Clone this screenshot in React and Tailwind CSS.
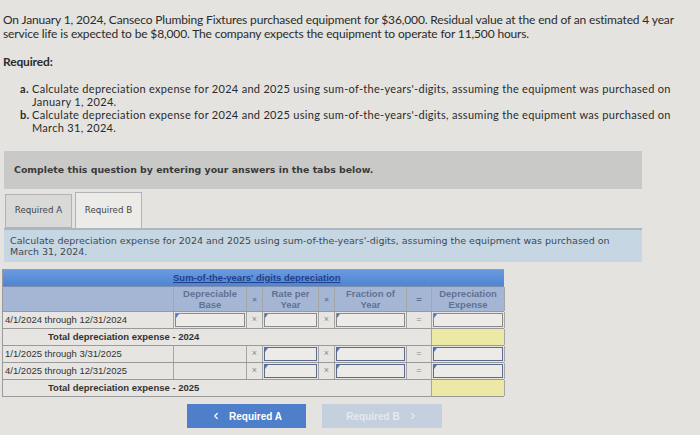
import { ChevronLeft, ChevronRight } from "lucide-react";

function Input({ blue }) {
  return (
    <div className="p-px h-full">
      <div
        className={`relative h-full bg-[#ecebe8] border ${blue ? "border-[#5d6b8e]" : "border-[#8a8a8a]"}`}
      >
        <span className="absolute left-0 top-0 w-0 h-0 border-t-[4px] border-t-[#4d77c4] border-r-[3px] border-r-transparent" />
      </div>
    </div>
  );
}

function Op({ sign }) {
  return (
    <div className="flex items-center justify-center text-[9px] text-[#8a8a8a] border-r border-[#a5a5a5] bg-[#e6e5e2]">
      {sign}
    </div>
  );
}

function Cell({ children, className = "" }) {
  return <div className={`border-r border-[#a5a5a5] ${className}`}>{children}</div>;
}

export default function App() {
  const rowCls = "grid grid-cols-[171px_73px_16px_56px_16px_72px_25px_73px] border-b border-[#9a9a9a]";

  return (
    <div className="w-[700px] h-[435px] overflow-hidden bg-[#e4e3df] text-[#2b2b2b] font-['Lato',sans-serif]">
      {/* PROBLEM TEXT */}
      <div className="pl-[3px] pt-[13px] text-[12px] leading-[14px] tracking-[-0.15px] whitespace-nowrap">
        <p>
          On January 1, 2024, Canseco Plumbing Fixtures purchased equipment for $36,000. Residual value at the end of an estimated 4 year
          <br />
          service life is expected to be $8,000. The company expects the equipment to operate for 11,500 hours.
        </p>
        <p className="mt-[14px] font-bold">Required:</p>
        <div className="mt-[13px] pl-[17px] text-[11px] leading-[13px] tracking-[0.3px]">
          <div className="flex">
            <span className="font-bold w-[12px]">a.</span>
            <span>
              Calculate depreciation expense for 2024 and 2025 using sum-of-the-years'-digits, assuming the equipment was purchased on
              <br />
              January 1, 2024.
            </span>
          </div>
          <div className="flex">
            <span className="font-bold w-[12px]">b.</span>
            <span>
              Calculate depreciation expense for 2024 and 2025 using sum-of-the-years'-digits, assuming the equipment was purchased on
              <br />
              March 31, 2024.
            </span>
          </div>
        </div>
      </div>

      {/* INSTRUCTION BAR */}
      <div className="ml-[4px] mt-[17px] w-[638px] h-[38px] bg-[#c9c9c8] flex items-center pl-[10px] font-['DejaVu_Sans',sans-serif] text-[9.4px] font-bold text-[#3a3a3a]">
        Complete this question by entering your answers in the tabs below.
      </div>

      {/* TABS */}
      <div className="ml-[5px] mt-[3px] flex items-end font-['DejaVu_Sans',sans-serif] text-[8.7px] text-[#444]">
        <div className="w-[67px] h-[34px] bg-[#d9d9d7] border border-[#b3b3b3] flex items-center justify-center">Required A</div>
        <div className="ml-[3px] w-[67px] h-[36px] bg-[#ecebe8] border border-b-0 border-[#b3b3b3] flex items-center justify-center">
          Required B
        </div>
      </div>

      {/* TAB BODY HEADER */}
      <div className="ml-[4px] w-[638px] h-[34px] bg-[#c6d6e2] border-t-2 border-[#aab7c1] pl-[6px] pt-[5px] font-['DejaVu_Sans',sans-serif] text-[9.5px] leading-[11px] text-[#3d4a55] whitespace-nowrap">
        Calculate depreciation expense for 2024 and 2025 using sum-of-the-years'-digits, assuming the equipment was purchased on
        <br />
        March 31, 2024.
      </div>

      {/* TABLE */}
      <div className="ml-[2px] mt-[7px] w-[502px] border-l border-t border-[#9a9a9a] font-['Liberation_Sans',sans-serif] text-[9.5px] text-[#333] whitespace-nowrap">
        <div className="h-[17px] bg-gradient-to-b from-[#6a9be0] to-[#4f84d2] border-b border-[#7c8fae] flex items-center">
          <span className="ml-[170px] font-bold text-[#1f3f8a] underline">Sum-of-the-years' digits depreciation</span>
        </div>
        <div className={`${rowCls} h-[25px] bg-[#a4b6d4] text-[#5f7294] font-bold leading-[11px]`}>
          <Cell className="border-[#8194b3]" />
          <Cell className="border-[#8194b3] flex items-center justify-center text-center">Depreciable<br />Base</Cell>
          <Cell className="border-[#8194b3] flex items-center justify-center text-[8px]">×</Cell>
          <Cell className="border-[#8194b3] flex items-center justify-center text-center">Rate per<br />Year</Cell>
          <Cell className="border-[#8194b3] flex items-center justify-center text-[8px]">×</Cell>
          <Cell className="border-[#8194b3] flex items-center justify-center text-center">Fraction of<br />Year</Cell>
          <Cell className="border-[#8194b3] flex items-center justify-center">=</Cell>
          <Cell className="border-[#8194b3] flex items-center justify-center text-center">Depreciation<br />Expense</Cell>
        </div>

        <div className={`${rowCls} h-[17px] bg-[#e6e5e2]`}>
          <Cell className="flex items-center pl-[2px]">4/1/2024 through 12/31/2024</Cell>
          <Cell><Input /></Cell>
          <Op sign="×" />
          <Cell><Input /></Cell>
          <Op sign="×" />
          <Cell><Input /></Cell>
          <Op sign="=" />
          <Cell><Input /></Cell>
        </div>

        <div className="grid grid-cols-[429px_73px] h-[17px] border-b border-[#9a9a9a] bg-[#e6e5e2]">
          <Cell className="flex items-center pl-[45px] font-bold">Total depreciation expense - 2024</Cell>
          <Cell className="bg-[#ece8a6]" />
        </div>

        <div className={`${rowCls} h-[17px] bg-[#e6e5e2]`}>
          <Cell className="flex items-center pl-[2px]">1/1/2025 through 3/31/2025</Cell>
          <Cell />
          <Op sign="×" />
          <Cell><Input blue /></Cell>
          <Op sign="×" />
          <Cell><Input blue /></Cell>
          <Op sign="=" />
          <Cell><Input blue /></Cell>
        </div>

        <div className={`${rowCls} h-[17px] bg-[#e6e5e2]`}>
          <Cell className="flex items-center pl-[2px]">4/1/2025 through 12/31/2025</Cell>
          <Cell />
          <Op sign="×" />
          <Cell><Input blue /></Cell>
          <Op sign="×" />
          <Cell><Input blue /></Cell>
          <Op sign="=" />
          <Cell><Input blue /></Cell>
        </div>

        <div className="grid grid-cols-[429px_73px] h-[17px] border-b border-[#9a9a9a] bg-[#e6e5e2]">
          <Cell className="flex items-center pl-[45px] font-bold">Total depreciation expense - 2025</Cell>
          <Cell className="bg-[#ece8a6]" />
        </div>
      </div>

      {/* NAV BUTTONS */}
      <div className="ml-[187px] mt-[7px] flex gap-[16px] font-['Liberation_Sans',sans-serif] text-[10px] font-bold">
        <button className="w-[119px] h-[24px] bg-[#4d7fca] text-white flex items-center justify-center gap-[8px]">
          <ChevronLeft size={10} strokeWidth={3} />
          Required A
        </button>
        <button className="w-[120px] h-[24px] bg-[#c5d0de] text-[#e4e9f0] flex items-center justify-center gap-[8px]">
          Required B
          <ChevronRight size={10} strokeWidth={3} />
        </button>
      </div>
    </div>
  );
}
